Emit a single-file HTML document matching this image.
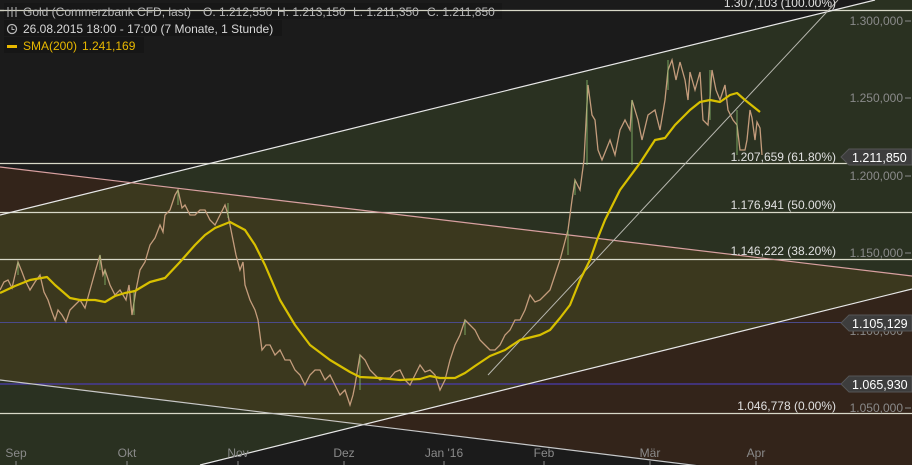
<!DOCTYPE html>
<html><head><meta charset="utf-8"><style>
html,body{margin:0;padding:0;background:#1b1b1b;}
svg{display:block;font-family:"Liberation Sans","DejaVu Sans",sans-serif;}
</style></head><body>
<svg width="912" height="465" viewBox="0 0 912 465" xmlns="http://www.w3.org/2000/svg">
<defs>
<clipPath id="down"><polygon points="0,167 912,276 912,495 0,380"/></clipPath>
</defs>
<rect width="912" height="465" fill="#1b1b1b"/>
<polygon points="0,215 875,0 912,0 912,289 200,465 0,465" fill="#2a3121"/>
<polygon points="0,167 912,276 912,465 700,465 0,380" fill="#33241a"/>
<polygon clip-path="url(#down)" points="0,215 875,0 912,0 912,289 200,465 0,465" fill="#3b381e"/>

<g stroke="#d8d8c8" stroke-width="1.2">
<line x1="0" y1="10.5" x2="912" y2="10.5"/>
<line x1="0" y1="163.5" x2="912" y2="163.5"/>
<line x1="0" y1="212.5" x2="912" y2="212.5"/>
<line x1="0" y1="259.5" x2="912" y2="259.5"/>
<line x1="0" y1="413.5" x2="912" y2="413.5"/>
</g>
<line x1="0" y1="322.5" x2="912" y2="322.5" stroke="#4a4a8a" stroke-width="1"/>
<line x1="0" y1="384" x2="912" y2="384" stroke="#4a3cb0" stroke-width="1.2"/>

<line x1="0" y1="215" x2="875" y2="0" stroke="#e8e8e8" stroke-width="1.2"/>
<line x1="200" y1="465" x2="912" y2="289" stroke="#e8e8e8" stroke-width="1.2"/>
<line x1="0" y1="167" x2="912" y2="276" stroke="#d8a0a0" stroke-width="1.2"/>
<line x1="0" y1="380" x2="700" y2="466" stroke="#c8c8c8" stroke-width="1.2"/>
<line x1="488" y1="375" x2="838" y2="0" stroke="#b8b8b0" stroke-width="1"/>

<polyline fill="none" stroke="#c49c7c" stroke-width="1.3" points="0,290 4,282 8,280 12,288 18,262 22,272 25,280 30,290 35,282 40,275 44,292 48,300 52,312 55,320 58,310 62,315 66,322 70,310 75,305 80,300 85,308 90,290 95,272 100,255 103,275 105,270 110,285 115,295 120,290 126,300 129,285 132,315 136,290 140,270 145,262 150,245 155,238 160,225 163,232 165,215 170,210 175,195 178,190 182,208 185,205 190,215 195,215 200,210 205,210 210,220 215,225 220,215 225,205 228,215 232,235 236,255 240,270 243,262 245,285 250,300 255,310 258,320 262,350 266,345 270,345 275,355 280,350 285,360 290,360 295,370 300,375 305,385 310,375 315,370 320,370 325,380 330,375 335,385 340,395 345,390 350,405 353,395 355,385 360,355 365,360 370,370 375,375 380,380 385,378 390,378 395,372 400,370 405,380 410,385 415,375 420,365 425,372 430,370 435,375 440,390 445,380 450,360 455,345 460,335 465,320 470,325 475,330 480,340 485,345 490,350 495,350 500,345 505,335 510,330 515,320 520,320 525,310 530,295 535,302 540,300 545,295 550,290 555,275 560,260 564,245 568,230 572,200 575,180 580,190 584,160 588,85 592,115 595,120 598,150 602,160 606,150 610,140 615,155 620,130 625,120 630,130 632,100 638,120 642,140 648,115 655,110 660,130 665,100 668,70 672,60 676,80 680,62 685,80 688,100 690,72 695,90 700,72 703,120 708,125 712,70 716,90 720,100 725,85 728,110 733,120 737,125 740,150 745,150 747,140 750,110 752,118 755,140 757,122 760,128 762,155"/>
<g stroke="#8cc070" stroke-width="1" opacity="0.8">
<line x1="18" y1="262" x2="18" y2="275"/><line x1="100" y1="255" x2="100" y2="270"/><line x1="105" y1="270" x2="105" y2="285"/>
<line x1="134" y1="290" x2="134" y2="315"/><line x1="178" y1="190" x2="178" y2="205"/><line x1="228" y1="203" x2="228" y2="218"/>
<line x1="360" y1="355" x2="360" y2="390"/><line x1="465" y1="320" x2="465" y2="335"/><line x1="568" y1="230" x2="568" y2="255"/>
<line x1="575" y1="180" x2="575" y2="195"/><line x1="587" y1="80" x2="587" y2="165"/><line x1="632" y1="100" x2="632" y2="165"/>
<line x1="668" y1="60" x2="668" y2="90"/><line x1="710" y1="70" x2="710" y2="120"/><line x1="737" y1="110" x2="737" y2="155"/>
</g>

<polyline fill="none" stroke="#d8c000" stroke-width="2.2" stroke-linejoin="round" points="0,293 15,286 30,280 47,277 55,285 70,298 80,300 95,300 105,302 115,296 125,293 135,291 150,282 165,278 180,262 195,245 205,235 215,228 230,222 245,230 255,245 265,265 280,300 295,325 310,345 330,360 350,372 360,377 380,378 400,380 420,379 430,376 440,378 455,378 465,373 475,366 490,356 505,350 520,340 540,335 550,330 560,318 570,305 580,280 590,260 597,240 605,220 620,190 640,163 655,140 665,138 675,125 690,110 700,102 710,100 720,102 730,95 737,93 745,100 755,108 760,112"/>

<g fill="#e0e0e0" font-size="12" text-anchor="end">
<text x="836" y="7">1.307,103 (100.00%)</text>
<text x="836" y="161">1.207,659 (61.80%)</text>
<text x="836" y="209">1.176,941 (50.00%)</text>
<text x="836" y="255">1.146,222 (38.20%)</text>
<text x="836" y="410">1.046,778 (0.00%)</text>
</g>

<g fill="#8a8a8a" font-size="12" text-anchor="end">
<text x="903" y="25">1.300,000</text>
<text x="903" y="102">1.250,000</text>
<text x="903" y="180">1.200,000</text>
<text x="903" y="257">1.150,000</text>
<text x="903" y="335">1.100,000</text>
<text x="903" y="412">1.050,000</text>
</g>
<g stroke="#8a8a8a" stroke-width="1">
<line x1="905" y1="21" x2="911" y2="21"/><line x1="905" y1="98" x2="911" y2="98"/>
<line x1="905" y1="176" x2="911" y2="176"/><line x1="905" y1="253" x2="911" y2="253"/>
<line x1="905" y1="408" x2="911" y2="408"/>
</g>

<g font-size="12.5" fill="#ffffff">
<polygon points="841,157 849,149 912,149 912,165 849,165" fill="#3d3d3d" stroke="#555"/>
<text x="852" y="162">1.211,850</text>
<polygon points="841,323 849,315 912,315 912,331 849,331" fill="#3d3d3d" stroke="#555"/>
<text x="852" y="328">1.105,129</text>
<polygon points="841,384 849,376 912,376 912,392 849,392" fill="#3d3d3d" stroke="#555"/>
<text x="852" y="389">1.065,930</text>
</g>

<g fill="#8a8a8a" font-size="12" text-anchor="middle">
<text x="16" y="457">Sep</text><text x="127" y="457">Okt</text><text x="238" y="457">Nov</text>
<text x="344" y="457">Dez</text><text x="444" y="457">Jan '16</text><text x="544" y="457">Feb</text>
<text x="650" y="457">Mär</text><text x="756" y="457">Apr</text>
</g>
<g stroke="#8a8a8a"><line x1="16" y1="461" x2="16" y2="465"/><line x1="127" y1="461" x2="127" y2="465"/><line x1="238" y1="461" x2="238" y2="465"/><line x1="344" y1="461" x2="344" y2="465"/><line x1="444" y1="461" x2="444" y2="465"/><line x1="544" y1="461" x2="544" y2="465"/><line x1="650" y1="461" x2="650" y2="465"/><line x1="756" y1="461" x2="756" y2="465"/></g>

<rect x="4" y="3" width="498" height="16" fill="#171717"/>
<rect x="4" y="20" width="278" height="16" fill="#161616"/>
<rect x="4" y="37" width="140" height="16" fill="#161616"/>
<line x1="0" y1="10.5" x2="502" y2="10.5" stroke="#d0d0c0" stroke-width="1.2"/>
<g font-size="12" fill="#b8b8b8">
<text x="23" y="16">Gold (Commerzbank CFD, last)</text>
<text x="203" y="16">O. 1.212,550</text>
<text x="277" y="16">H. 1.213,150</text>
<text x="353" y="16">L. 1.211,350</text>
<text x="427" y="16">C. 1.211,850</text>
<text x="23" y="33" fill="#d8d8d8">26.08.2015 18:00 - 17:00 (7 Monate, 1 Stunde)</text>
<text x="23" y="50" fill="#e8b800">SMA(200)</text>
<text x="82" y="50" fill="#e8b800">1.241,169</text>
</g>
<g stroke="#b8b8b8" stroke-width="1" fill="none">
<line x1="8" y1="7" x2="8" y2="17"/><line x1="12" y1="7" x2="12" y2="17"/><line x1="16" y1="7" x2="16" y2="17"/>
<circle cx="12" cy="29" r="4.5" stroke-width="1.3"/><path d="M12 26.5 V29.5 H14.5"/>
</g>
<rect x="7" y="45" width="10" height="3" fill="#e8b800"/>
</svg>
</body></html>
